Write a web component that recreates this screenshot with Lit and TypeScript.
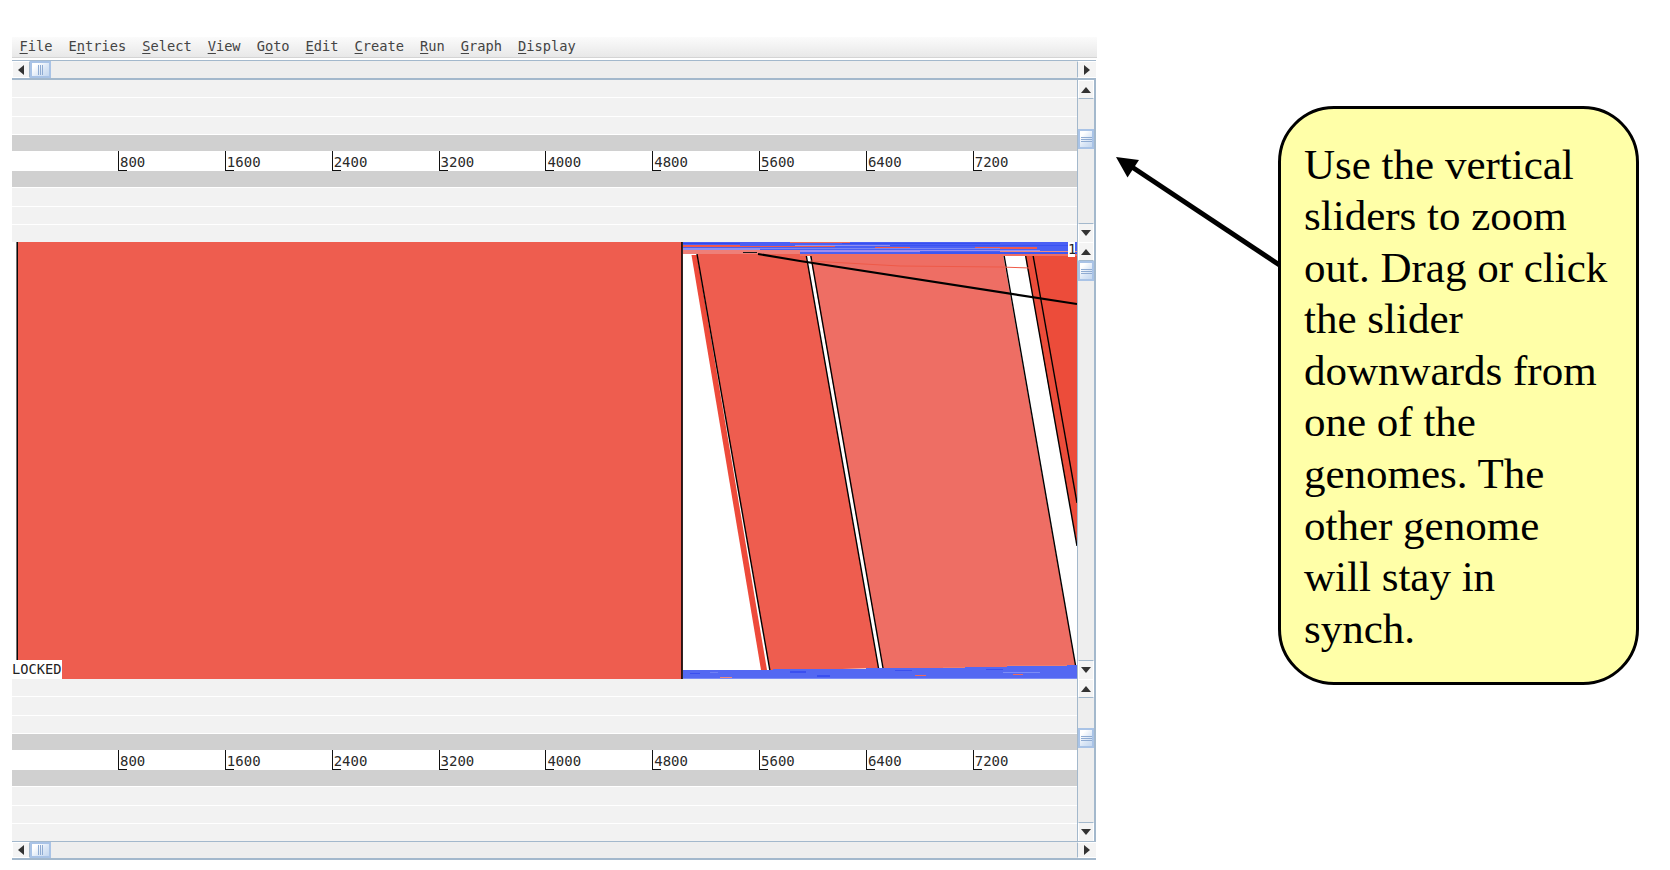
import { LitElement, html, css, svg } from 'lit';
import { customElement, property } from 'lit/decorators.js';

const MENU: [string, string, string][] = [
  ['', 'F', 'ile'],
  ['E', 'n', 'tries'],
  ['', 'S', 'elect'],
  ['', 'V', 'iew'],
  ['G', 'o', 'to'],
  ['', 'E', 'dit'],
  ['', 'C', 'reate'],
  ['', 'R', 'un'],
  ['', 'G', 'raph'],
  ['', 'D', 'isplay'],
];

const TICKS = [800, 1600, 2400, 3200, 4000, 4800, 5600, 6400, 7200];

const CALLOUT = [
  'Use the vertical',
  'sliders to zoom',
  'out. Drag or click',
  'the slider',
  'downwards from',
  'one of the',
  'genomes. The',
  'other genome',
  'will stay in',
  'synch.',
];

// comparison bands: x1, x2, y, height, colour
const TOP_BAND: [number, number, number, number, string][] = [
  [683, 1077, 242, 12, '#4a60f4'],
  [683, 740, 243, 1, '#2f48ee'],
  [790, 850, 242, 1, '#ef6a5c'],
  [842, 1000, 243, 1, '#3550f0'],
  [683, 740, 245, 2, '#ee5a50'],
  [720, 835, 246, 1, '#ee5a50'],
  [795, 890, 245, 1, '#8f8ff0'],
  [890, 1069, 245, 1, '#3a52f2'],
  [875, 910, 247, 1, '#ee5a50'],
  [975, 1037, 247, 2, '#ee5a50'],
  [683, 760, 248, 2, '#8f8ff0'],
  [760, 1000, 248, 1, '#7c86f2'],
  [683, 800, 250, 4, '#ee7f78'],
  [800, 920, 250, 2, '#a08df0'],
  [920, 1040, 250, 1, '#9c90f0'],
  [1000, 1077, 251, 1, '#ef8a80'],
  [743, 757, 252, 1, '#1a1a1a'],
  [920, 1077, 252, 2, '#3d56f3'],
  [800, 1077, 254, 2, '#ee6e64'],
];

const BOTTOM_BAND: [number, number, number, number, string][] = [
  [683, 773, 670, 9, '#5468f2'],
  [773, 866, 669, 10, '#5468f2'],
  [866, 965, 668, 11, '#5468f2'],
  [965, 1007, 667, 12, '#5468f2'],
  [1007, 1077, 665, 14, '#5468f2'],
  [943, 965, 667, 1, '#ee7f70'],
  [1007, 1067, 665, 1, '#ee7f70'],
  [690, 700, 673, 1, '#3a4ff0'],
  [710, 718, 672, 1, '#6f80f5'],
  [790, 806, 671, 2, '#3a4ff0'],
  [817, 830, 675, 2, '#3a4ff0'],
  [895, 912, 670, 1, '#3a4ff0'],
  [986, 1003, 669, 1, '#3a4ff0'],
  [1003, 1040, 672, 1, '#7c8cf6'],
  [720, 732, 677, 2, '#ef8a7c'],
  [915, 926, 675, 1, '#ee6a5c'],
  [1013, 1023, 674, 1, '#ee6a5c'],
  [683, 1077, 678, 1, '#7c8cf6'],
];

@customElement('metal-scrollbar')
export class MetalScrollbar extends LitElement {
  static override styles = css`
    :host {
      display: flex;
      box-sizing: border-box;
      background: #eeeeee;
      border: 0 solid #a3b8cc;
    }
    :host([orient='v']) {
      flex-direction: column;
      width: 19px;
      border-left-width: 1px;
      border-right-width: 2px;
    }
    :host([orient='h']) {
      flex-direction: row;
      height: 20px;
      border-top-width: 1px;
      border-bottom-width: 2px;
    }
    .btn {
      flex: none;
      display: flex;
      align-items: center;
      justify-content: center;
      box-sizing: border-box;
      background: #f4f4f4;
      border: 1px solid #ffffff;
    }
    :host([orient='v']) .btn {
      height: 19px;
      border-bottom: 1px solid #a3b8cc;
    }
    :host([orient='v']) .btn.end {
      border-top: 1px solid #a3b8cc;
      border-bottom: none;
    }
    :host([orient='h']) .btn {
      width: 18px;
      border-right: 1px solid #a3b8cc;
    }
    :host([orient='h']) .btn.end {
      border-left: 1px solid #a3b8cc;
      border-right: none;
      width: 19px;
    }
    .track {
      flex: 1;
      display: flex;
      min-width: 0;
      min-height: 0;
    }
    :host([orient='v']) .track {
      flex-direction: column;
    }
    .thumb {
      flex: none;
      box-sizing: border-box;
      display: flex;
      align-items: center;
      justify-content: center;
      border: 2px solid #a9c3e6;
      background: linear-gradient(135deg, #ffffff 20%, #dbe7f6 60%, #c4d7ef);
    }
    :host([orient='v']) .thumb {
      height: 20px;
      flex-direction: column;
      gap: 1px;
    }
    :host([orient='h']) .thumb {
      width: 21px;
      flex-direction: row;
      gap: 1px;
    }
    .grip {
      flex: none;
      background: #8fabd2;
    }
    :host([orient='v']) .grip {
      width: 11px;
      height: 1px;
    }
    :host([orient='h']) .grip {
      width: 1px;
      height: 10px;
    }
    svg {
      display: block;
      fill: #333333;
    }
  `;

  @property({ type: String, reflect: true }) orient: 'v' | 'h' = 'v';
  @property({ type: Number }) pos = 0;

  private arrow(end: boolean) {
    const v = this.orient === 'v';
    const w = v ? 10 : 6;
    const h = v ? 6 : 10;
    const pts = v
      ? end ? '0,0 10,0 5,6' : '0,6 10,6 5,0'
      : end ? '0,0 6,5 0,10' : '6,0 0,5 6,10';
    return html`<svg width=${w} height=${h} viewBox="0 0 ${w} ${h}"><polygon points=${pts}></polygon></svg>`;
  }

  override render() {
    const offset = this.orient === 'v' ? `margin-top:${this.pos}px` : `margin-left:${this.pos}px`;
    return html`
      <div class="btn">${this.arrow(false)}</div>
      <div class="track">
        <div class="thumb" style=${offset}>
          <span class="grip"></span><span class="grip"></span><span class="grip"></span>
        </div>
      </div>
      <div class="btn end">${this.arrow(true)}</div>
    `;
  }
}

@customElement('feature-panel')
export class FeaturePanel extends LitElement {
  static override styles = css`
    :host {
      display: flex;
      height: 162px;
    }
    .rows {
      flex: 1;
      display: flex;
      flex-direction: column;
      background: #ffffff;
      min-width: 0;
    }
    .frame {
      height: 17.3px;
      margin-bottom: 1px;
      background: #f2f2f2;
    }
    .frame.last {
      margin-bottom: 0;
      height: 17px;
    }
    .seq {
      height: 16.5px;
      background: #d0d0d0;
    }
    .seq.below {
      margin-bottom: 1px;
    }
    .ruler {
      display: flex;
      height: 19.5px;
      padding-left: 106px;
      font: 14px 'DejaVu Sans Mono', monospace;
      color: #2a2a2a;
      line-height: 22px;
    }
    .tick {
      position: relative;
      flex: 0 0 106.85px;
      box-sizing: border-box;
      border-left: 1px solid #111111;
      padding-left: 1px;
    }
    .tick::after {
      content: '';
      position: absolute;
      left: 0;
      bottom: 0;
      width: 8px;
      height: 1px;
      background: #111111;
    }
  `;

  @property({ type: Number }) thumb = 30;

  override render() {
    return html`
      <div class="rows">
        <div class="frame"></div>
        <div class="frame"></div>
        <div class="frame"></div>
        <div class="seq"></div>
        <div class="ruler">${TICKS.map((t) => html`<div class="tick">${t}</div>`)}</div>
        <div class="seq below"></div>
        <div class="frame"></div>
        <div class="frame"></div>
        <div class="frame last"></div>
      </div>
      <metal-scrollbar orient="v" .pos=${this.thumb}></metal-scrollbar>
    `;
  }
}

@customElement('app-root')
export class AppRoot extends LitElement {
  static override styles = css`
    :host {
      display: block;
      position: relative;
      width: 1670px;
      height: 870px;
      overflow: hidden;
      background: #ffffff;
    }
    .page {
      display: flex;
      align-items: flex-start;
      padding-left: 12px;
    }
    .window {
      flex: none;
      width: 1084px;
      margin-top: 37px;
    }
    .menu {
      display: flex;
      gap: 16px;
      height: 21px;
      margin-right: -1px;
      padding-left: 7.5px;
      padding-bottom: 2px;
      align-items: center;
      box-sizing: border-box;
      font: 13.7px 'DejaVu Sans Mono', monospace;
      color: #444444;
      background: linear-gradient(#fbfbfb, #e8e8e8);
      border-bottom: 1px solid #d4d4d4;
    }
    .menu u {
      text-underline-offset: 2px;
    }
    .gap {
      height: 2px;
    }
    .comparison {
      display: flex;
      height: 437px;
    }
    .canvas {
      position: relative;
      flex: 1;
      min-width: 0;
      overflow: hidden;
      background: #ffffff;
    }
    .canvas svg {
      display: block;
    }
    .label {
      position: absolute;
      background: #ffffff;
      font: 13.7px 'DejaVu Sans Mono', monospace;
      color: #222222;
      overflow: hidden;
    }
    .locked {
      left: 0;
      bottom: 0;
      width: 50px;
      height: 19px;
      line-height: 19px;
    }
    .one {
      right: 2px;
      top: 0;
      width: 7px;
      height: 15px;
      line-height: 15px;
    }
    .bottom-bar {
      height: 19px;
    }
    .callout {
      flex: none;
      box-sizing: border-box;
      width: 361px;
      height: 579px;
      margin-left: 182px;
      margin-top: 106px;
      padding: 29.5px 0 0 23px;
      border: 3px solid #000000;
      border-radius: 56px;
      background: #ffffa8;
      font: 43px/51.6px 'Liberation Serif', serif;
      color: #000000;
      position: relative;
      z-index: 1;
    }
    .callout div {
      white-space: nowrap;
    }
    .arrow {
      position: absolute;
      left: 0;
      top: 0;
    }
  `;

  private canvas() {
    const band = (rows: [number, number, number, number, string][]) =>
      rows.map(([x1, x2, y, h, c]) => svg`<rect x=${x1} y=${y} width=${x2 - x1} height=${h} fill=${c}></rect>`);
    return html`
      <svg width="1065" height="437" viewBox="12 242 1065 437">
        <rect x="17.5" y="242" width="665" height="437" fill="#ee5d4f"></rect>
        <polygon points="691.5,255 697,255 767,670 761,670" fill="#ee4a3a"></polygon>
        <polygon points="697,254 806,254 878.5,668 770,671" fill="#ee5d4f"></polygon>
        <polygon points="810,254 1003,254 1076,668 883,668" fill="#ee6e64"></polygon>
        <polygon points="1025,254 1077,254 1077,546" fill="#ec4c3a"></polygon>
        <polygon points="1004,254 1025,254 1026,267 1006,267" fill="#ffffff"></polygon>
        <line x1="17.2" y1="242" x2="17.2" y2="660" stroke="#000" stroke-width="1.5"></line>
        <line x1="682" y1="242" x2="682" y2="679" stroke="#000" stroke-width="1.6"></line>
        <g stroke="#000" stroke-width="1.4" fill="none">
          <line x1="697" y1="254" x2="770" y2="671"></line>
          <line x1="806" y1="254" x2="878.5" y2="668"></line>
          <line x1="810.5" y1="254" x2="883" y2="668"></line>
          <line x1="1004" y1="255" x2="1076" y2="668"></line>
          <line x1="1025.5" y1="255" x2="1077" y2="546"></line>
          <line x1="1033" y1="255" x2="1077" y2="503"></line>
        </g>
        <polyline points="810,261 900,266 1000,267 1030,268" fill="none" stroke="#ef5a48" stroke-width="1"></polyline>
        ${band(TOP_BAND)}
        ${band(BOTTOM_BAND)}
        <polyline points="758,254 800,261 1077,304" fill="none" stroke="#000" stroke-width="2.2"></polyline>
      </svg>
      <div class="label locked">LOCKED</div>
      <div class="label one">1</div>
    `;
  }

  override render() {
    return html`
      <div class="page">
        <div class="window">
          <div class="menu">
            ${MENU.map(([a, m, b]) => html`<span>${a}<u>${m}</u>${b}</span>`)}
          </div>
          <div class="gap"></div>
          <metal-scrollbar orient="h"></metal-scrollbar>
          <feature-panel .thumb=${30}></feature-panel>
          <div class="comparison">
            <div class="canvas">${this.canvas()}</div>
            <metal-scrollbar orient="v" .pos=${0}></metal-scrollbar>
          </div>
          <feature-panel .thumb=${30}></feature-panel>
          <metal-scrollbar class="bottom-bar" orient="h"></metal-scrollbar>
        </div>
        <div class="callout">
          ${CALLOUT.map((line) => html`<div>${line}</div>`)}
        </div>
      </div>
      <svg class="arrow" width="1670" height="870" viewBox="0 0 1670 870">
        <line x1="1281" y1="266" x2="1132" y2="167" stroke="#000" stroke-width="5"></line>
        <polygon points="1116,157 1139,160 1127.5,177.5" fill="#000"></polygon>
      </svg>
    `;
  }
}
